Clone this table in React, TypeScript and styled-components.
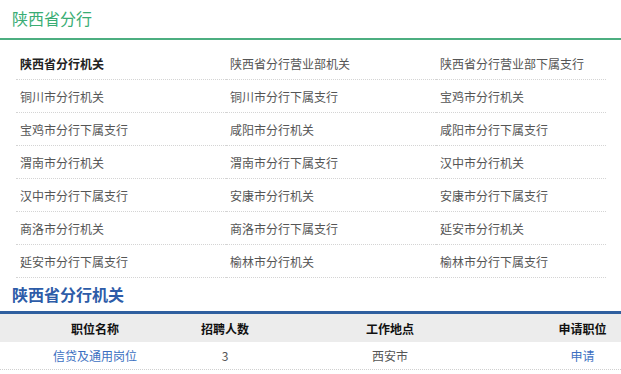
import React from "react";
import styled, { createGlobalStyle } from "styled-components";

const Global = createGlobalStyle`
  html, body { margin: 0; padding: 0; background: #fff; }
  body { font-family: "Microsoft YaHei", "Noto Sans CJK SC", sans-serif; font-size: 12px; color: #333; }
`;

const Page = styled.div`
  width: 621px;
  overflow: hidden;
`;

const GreenHeader = styled.div`
  border-bottom: 2px solid #4cae80;
  display: flex;
  align-items: center;
  padding-left: 12px;
  box-sizing: border-box;
  height: 40px;
`;

const GreenTitle = styled.h2`
  margin: 0;
  font-size: 16px;
  font-weight: normal;
  color: #3aad74;
  line-height: 20px;
  margin-top: -3px;
`;

const BranchList = styled.ul`
  list-style: none;
  margin: 7px 15px 0 16px;
  padding: 0;
  display: grid;
  grid-template-columns: 210px 210px 1fr;
`;

const BranchItem = styled.li<{ $strong?: boolean }>`
  height: 32px;
  border-bottom: 1px dotted #d4d4d4;
  display: flex;
  align-items: center;
  padding-left: 4px;
  padding-top: 0;
  font-size: 12px;
  color: ${(p) => (p.$strong ? "#222" : "#555")};
  font-weight: ${(p) => (p.$strong ? "bold" : "normal")};
`;

const BlueHeader = styled.div`
  height: 35px;
  border-bottom: 3px solid #2f5f9f;
  display: flex;
  align-items: center;
  padding-left: 12px;
  box-sizing: border-box;
  margin-top: 1px;
`;

const BlueTitle = styled.h2`
  margin: 0;
  font-size: 16px;
  font-weight: bold;
  color: #2d5ca8;
  line-height: 20px;
  margin-top: -2px;
`;

const Row = styled.div<{ $head?: boolean }>`
  display: grid;
  grid-template-columns: 190px 70px 260px 1fr;
  height: ${(p) => (p.$head ? "28px" : "27px")};
  background: ${(p) => (p.$head ? "#ececec" : "#fff")};
  border-bottom: ${(p) => (p.$head ? "none" : "1px dotted #cfcfcf")};
`;

const Cell = styled.div<{ $head?: boolean; $link?: boolean; $last?: boolean }>`
  display: flex;
  align-items: center;
  justify-content: center;
  padding-left: ${(p) => (p.$last ? "24px" : "0")};
  font-size: 12px;
  font-weight: ${(p) => (p.$head ? "bold" : "normal")};
  color: ${(p) => (p.$head ? "#111" : p.$link ? "#3b6fc1" : "#555")};
`;

const branches = [
  "陕西省分行机关",
  "陕西省分行营业部机关",
  "陕西省分行营业部下属支行",
  "铜川市分行机关",
  "铜川市分行下属支行",
  "宝鸡市分行机关",
  "宝鸡市分行下属支行",
  "咸阳市分行机关",
  "咸阳市分行下属支行",
  "渭南市分行机关",
  "渭南市分行下属支行",
  "汉中市分行机关",
  "汉中市分行下属支行",
  "安康市分行机关",
  "安康市分行下属支行",
  "商洛市分行机关",
  "商洛市分行下属支行",
  "延安市分行机关",
  "延安市分行下属支行",
  "榆林市分行机关",
  "榆林市分行下属支行",
];

export default function App() {
  return (
    <Page>
      <Global />
      <GreenHeader>
        <GreenTitle>陕西省分行</GreenTitle>
      </GreenHeader>
      <BranchList>
        {branches.map((b, i) => (
          <BranchItem key={b} $strong={i === 0}>
            {b}
          </BranchItem>
        ))}
      </BranchList>
      <BlueHeader>
        <BlueTitle>陕西省分行机关</BlueTitle>
      </BlueHeader>
      <Row $head>
        <Cell $head>职位名称</Cell>
        <Cell $head>招聘人数</Cell>
        <Cell $head>工作地点</Cell>
        <Cell $head $last>申请职位</Cell>
      </Row>
      <Row>
        <Cell $link>信贷及通用岗位</Cell>
        <Cell>3</Cell>
        <Cell>西安市</Cell>
        <Cell $link $last>申请</Cell>
      </Row>
    </Page>
  );
}
